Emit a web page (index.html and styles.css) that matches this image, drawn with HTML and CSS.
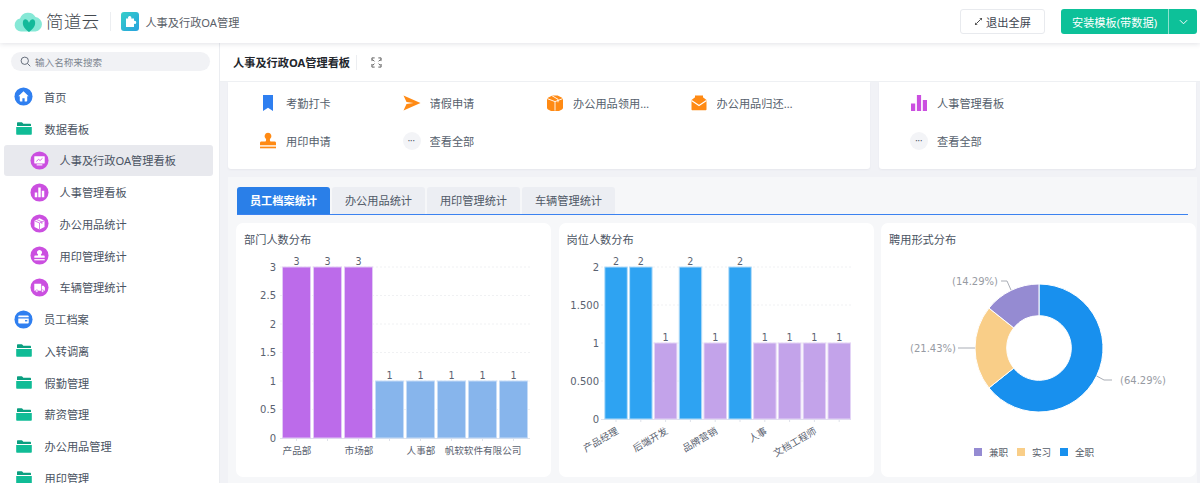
FILE: index.html
```html
<!DOCTYPE html>
<html lang="zh-CN">
<head>
<meta charset="utf-8">
<title>人事及行政OA管理</title>
<link rel="stylesheet" href="styles.css">
</head>
<body>
<svg class="defs" width="0" height="0" aria-hidden="true">
  <symbol id="i-folder" viewBox="0 0 16 13"><path d="M1 1.2C1 .6 1.4.2 2 .2h3.6c.4 0 .7.2.9.5l.8 1.1H14c.6 0 1 .4 1 1V4H1z" fill="#0a9f80"/><path d="M.2 5h15.6v6.8c0 .6-.4 1-1 1H1.2c-.6 0-1-.4-1-1z" fill="#10bc96"/></symbol>
  <symbol id="i-home" viewBox="0 0 20 20"><circle cx="10" cy="10" r="9.5" fill="#2f7ff0"/><path d="M10 4.6 4.6 9.8h1.5v4.7c0 .4.3.7.7.7h2v-3.4h2.4v3.4h2c.4 0 .7-.3.7-.7V9.8h1.5z" fill="#fff"/></symbol>
  <symbol id="i-wallet" viewBox="0 0 20 20"><circle cx="10" cy="10" r="9.5" fill="#2f7ff0"/><path d="M4.5 6.6c0-.5.4-.9.9-.9h9.2c.5 0 .9.4.9.9v.9h-11zm0 2.3h11v4.5c0 .5-.4.9-.9.9H5.4c-.5 0-.9-.4-.9-.9z" fill="#fff"/><rect x="11.6" y="10.6" width="2.4" height="1.4" fill="#2f7ff0"/></symbol>
  <symbol id="i-screen" viewBox="0 0 20 20"><circle cx="10" cy="10" r="9.5" fill="#cb4fe0"/><path d="M5 5.5h10c.3 0 .5.2.5.5v6.6c0 .3-.2.5-.5.5H5c-.3 0-.5-.2-.5-.5V6c0-.3.2-.5.5-.5z" fill="#fff"/><rect x="7" y="14" width="6" height="1.2" fill="#fff"/><path d="m6.6 11 2.4-2.2 1.6 1.2 2.6-2.4" fill="none" stroke="#cb4fe0" stroke-width=".9"/></symbol>
  <symbol id="i-bars" viewBox="0 0 20 20"><circle cx="10" cy="10" r="9.5" fill="#cb4fe0"/><path d="M5 10h2.6v5H5zM8.7 4.8h2.6V15H8.7zM12.4 8.2H15V15h-2.6z" fill="#fff"/></symbol>
  <symbol id="i-box" viewBox="0 0 20 20"><circle cx="10" cy="10" r="9.5" fill="#cb4fe0"/><path d="M4.7 7 10 4.4 15.3 7v6.6L10 16.2l-5.3-2.6z" fill="#fff"/><path d="M4.9 7.2 10 9.5l5.1-2.3M10 9.5v6.7M7.2 5.8l5.3 2.5v2.2" fill="none" stroke="#cb4fe0" stroke-width=".8"/></symbol>
  <symbol id="i-stamp" viewBox="0 0 20 20"><circle cx="10" cy="10" r="9.5" fill="#cb4fe0"/><path d="M10 4.2a2.6 2.6 0 0 1 1.7 4.6c-.3.3-.3 1 .1 1.3h2.8c.5 0 .9.4.9.9v1.3H4.500v-1.300c0-.5.4-.9.9-.9h2.800c.4-.3.4-1 .1-1.300A2.600 2.600 0 0 1 10 4.200z" fill="#fff"/><rect x="4.500" y="13.800" width="11" height="1.300" fill="#fff"/></symbol>
  <symbol id="i-truck" viewBox="0 0 20 20"><circle cx="10" cy="10" r="9.500" fill="#cb4fe0"/><path d="M4.500 6h7.300v7.300H4.500zM12.500 8.200h1.800l1.400 1.900v3.200h-3.200z" fill="#fff"/><circle cx="7.200" cy="13.700" r="1.300" fill="#fff" stroke="#cb4fe0" stroke-width=".6"/><circle cx="13.300" cy="13.700" r="1.300" fill="#fff" stroke="#cb4fe0" stroke-width=".6"/></symbol>
  <symbol id="t-mark" viewBox="0 0 18 18"><path d="M4 1h10v16l-5-3.300L4 17z" fill="#2f7ff0"/></symbol>
  <symbol id="t-send" viewBox="0 0 18 18"><path d="M.5 1.600 17.500 9 .5 16.400l3-6.400 7-1-7-1z" fill="#ff8a14"/></symbol>
  <symbol id="t-box" viewBox="0 0 18 18"><path d="M2 3.800 6.300 1.400h5.400L16 3.800c.6.300 1 .9 1 1.600v8.400c0 .7-.4 1.300-1 1.600l-3 1.500H5l-3-1.500c-.6-.3-1-.9-1-1.600V5.400c0-.7.4-1.300 1-1.600z" fill="#ff8a14"/><path d="M1.200 4.600 9 7.600l7.800-3M9 7.600v9M5.800 1.600l6.200 3.700v3" fill="none" stroke="#fff" stroke-width=".9"/></symbol>
  <symbol id="t-mail" viewBox="0 0 18 18"><path d="M1.500 6 6 2.500v3.200L9 8l3-2.300V2.500L16.500 6v9.300c0 .6-.4 1-1 1h-13c-.6 0-1-.4-1-1z" fill="#ff8a14"/><path d="M5 1.500h8v4.200L9 8.800 5 5.700z" fill="#ff8a14"/><path d="M1.500 6.500 9 11.500l7.500-5" fill="none" stroke="#fff" stroke-width="1.100"/></symbol>
  <symbol id="t-stamp" viewBox="0 0 18 18"><path d="M9 .8a3.400 3.400 0 0 1 2.200 6c-.5.500-.5 2 .3 2.700h4.100c.8 0 1.400.6 1.400 1.400v2.300H1v-2.300c0-.8.6-1.400 1.400-1.400h4.100c.8-.7.800-2.200.3-2.700A3.400 3.400 0 0 1 9 .8z" fill="#ff8a14"/><rect x="1" y="14.600" width="16" height="1.700" fill="#ff8a14"/></symbol>
  <symbol id="t-bars" viewBox="0 0 18 18"><path d="M1 9.500h4.200V17H1zM6.900 1h4.200v16H6.900zM12.800 6H17v11h-4.200z" fill="#cb4fe0"/></symbol>
</svg>

<div class="app">
  <header class="topbar">
    <svg class="logo" viewBox="0 0 28 20" aria-hidden="true">
      <path d="M7 19.500a6.500 6.500 0 0 1-1-12.900A8.500 8.500 0 0 1 21.500 5 7.300 7.300 0 0 1 21.500 19.500z" fill="#86e8d6"/>
      <path d="M15 20C10.500 16.500 8.200 13.500 9 9.500 9.800 6.300 13.300 6.500 15 10.800 16.700 6.500 20.200 6.300 21 9.500 21.800 13.500 19.500 16.500 15 20z" fill="#14b99a"/>
    </svg>
    <span class="brand">简道云</span>
    <span class="topbar-sep"></span>
    <span class="app-badge">
      <svg viewBox="0 0 18 18" aria-hidden="true"><path d="M5 6h2.200c-.6-1.600.4-2.500 1.500-2.500s2.100.9 1.500 2.500H13v2.500c1.500-.5 2.200.4 2.200 1.400s-.7 1.900-2.200 1.400V14.500H5z" fill="#fff"/></svg>
    </span>
    <span class="app-name">人事及行政OA管理</span>
    <div class="topbar-actions">
      <button class="btn-exit">
        <svg viewBox="0 0 10 10" aria-hidden="true"><path d="M9 1 6 1.600 8.400 4zM1 9l3-.6L1.600 6z" fill="#333"/><path d="M7 3 3 7" stroke="#333" stroke-width="1"/></svg>
        退出全屏
      </button>
      <div class="btn-install">
        <span class="btn-install-main">安装模板(带数据)</span>
        <span class="btn-install-arrow">
          <svg viewBox="0 0 10 6" aria-hidden="true"><path d="m1 1 4 4 4-4" fill="none" stroke="#fff" stroke-width="1.100"/></svg>
        </span>
      </div>
    </div>
  </header>

  <div class="layout">
    <aside class="sidebar">
      <div class="search">
        <svg viewBox="0 0 12 12" aria-hidden="true"><circle cx="5.200" cy="5.200" r="4" fill="none" stroke="#5b6472" stroke-width="1"/><path d="m8.200 8.200 3 3" stroke="#5b6472" stroke-width="1"/></svg>
        <span>输入名称来搜索</span>
      </div>
      <nav class="nav">
        <a class="nav-row"><svg class="nav-icon"><use href="#i-home"/></svg>首页</a>
        <a class="nav-row"><svg class="nav-folder"><use href="#i-folder"/></svg>数据看板</a>
        <a class="nav-row sub active"><svg class="nav-icon"><use href="#i-screen"/></svg>人事及行政OA管理看板</a>
        <a class="nav-row sub"><svg class="nav-icon"><use href="#i-bars"/></svg>人事管理看板</a>
        <a class="nav-row sub"><svg class="nav-icon"><use href="#i-box"/></svg>办公用品统计</a>
        <a class="nav-row sub"><svg class="nav-icon"><use href="#i-stamp"/></svg>用印管理统计</a>
        <a class="nav-row sub"><svg class="nav-icon"><use href="#i-truck"/></svg>车辆管理统计</a>
        <a class="nav-row"><svg class="nav-icon"><use href="#i-wallet"/></svg>员工档案</a>
        <a class="nav-row"><svg class="nav-folder"><use href="#i-folder"/></svg>入转调离</a>
        <a class="nav-row"><svg class="nav-folder"><use href="#i-folder"/></svg>假勤管理</a>
        <a class="nav-row"><svg class="nav-folder"><use href="#i-folder"/></svg>薪资管理</a>
        <a class="nav-row"><svg class="nav-folder"><use href="#i-folder"/></svg>办公用品管理</a>
        <a class="nav-row"><svg class="nav-folder"><use href="#i-folder"/></svg>用印管理</a>
      </nav>
    </aside>

    <main class="main">
      <div class="titlebar">
        <h1>人事及行政OA管理看板</h1>
        <span class="titlebar-sep"></span>
        <svg class="expand" viewBox="0 0 12 12" aria-hidden="true"><path d="M4 1H1v3l1-1 1.800 1.800M8 1h3v3l-1-1-1.800 1.800M4 11H1V8l1 1 1.800-1.800M8 11h3V8l-1 1-1.800-1.800" fill="none" stroke="#444" stroke-width=".9"/></svg>
      </div>

      <div class="content">
        <section class="quick-row">
          <div class="quick-card wide">
            <a class="tile"><svg class="tile-icon"><use href="#t-mark"/></svg><span>考勤打卡</span></a>
            <a class="tile"><svg class="tile-icon"><use href="#t-send"/></svg><span>请假申请</span></a>
            <a class="tile"><svg class="tile-icon"><use href="#t-box"/></svg><span>办公用品领用申请</span></a>
            <a class="tile"><svg class="tile-icon"><use href="#t-mail"/></svg><span>办公用品归还申请</span></a>
            <a class="tile"><svg class="tile-icon"><use href="#t-stamp"/></svg><span>用印申请</span></a>
            <a class="tile"><i class="more">•••</i><span>查看全部</span></a>
          </div>
          <div class="quick-card narrow">
            <a class="tile"><svg class="tile-icon"><use href="#t-bars"/></svg><span>人事管理看板</span></a>
            <a class="tile"><i class="more">•••</i><span>查看全部</span></a>
          </div>
        </section>

        <section class="panel">
          <div class="tabs">
            <span class="tab current">员工档案统计</span>
            <span class="tab">办公用品统计</span>
            <span class="tab">用印管理统计</span>
            <span class="tab">车辆管理统计</span>
          </div>
          <div class="charts">
            <article class="chart-card">
              <h2>部门人数分布</h2>
              <svg class="chart" viewBox="0 0 315 220">
                <g class="grid"><path d="M44 10H294M44 38.500H294M44 67H294M44 95.500H294M44 124H294M44 152.500H294"/></g>
                <g class="axis"><path d="M44 181.500H294"/><path d="M60.500 181v3M91.500 181v3M122.500 181v3M153.500 181v3M184.500 181v3M215.500 181v3M246.500 181v3M277.500 181v3"/></g>
                <g class="ylabels">
                  <text x="40" y="13.500">3</text><text x="40" y="42">2.5</text><text x="40" y="70.500">2</text><text x="40" y="99">1.5</text><text x="40" y="127.500">1</text><text x="40" y="156">0.5</text><text x="40" y="184.500">0</text>
                </g>
                <g class="bar purple"><rect x="46.500" y="10" width="28" height="171"/><rect x="77.500" y="10" width="28" height="171"/><rect x="108.500" y="10" width="28" height="171"/></g>
                <g class="bar sky"><rect x="139.500" y="124" width="28" height="57"/><rect x="170.500" y="124" width="28" height="57"/><rect x="201.500" y="124" width="28" height="57"/><rect x="232.500" y="124" width="28" height="57"/><rect x="263.500" y="124" width="28" height="57"/></g>
                <g class="values">
                  <text x="60.500" y="7.500">3</text><text x="91.500" y="7.500">3</text><text x="122.500" y="7.500">3</text><text x="153.500" y="121.500">1</text><text x="184.500" y="121.500">1</text><text x="215.500" y="121.500">1</text><text x="246.500" y="121.500">1</text><text x="277.500" y="121.500">1</text>
                </g>
                <g class="xlabels"><text x="61" y="197">产品部</text><text x="123" y="197">市场部</text><text x="185" y="197">人事部</text><text x="247" y="197">帆软软件有限公司</text></g>
              </svg>
            </article>

            <article class="chart-card">
              <h2>岗位人数分布</h2>
              <svg class="chart" viewBox="0 0 315 220">
                <g class="grid"><path d="M42 10H292M42 48H292M42 86H292M42 124H292"/></g>
                <g class="axis"><path d="M42 162.500H292"/><path d="M57 162v3M81.800 162v3M106.600 162v3M131.400 162v3M156.200 162v3M181 162v3M205.800 162v3M230.600 162v3M255.400 162v3M280.200 162v3"/></g>
                <g class="ylabels"><text x="40" y="13.500">2</text><text x="40" y="51.500">1.500</text><text x="40" y="89.500">1</text><text x="40" y="127.500">0.500</text><text x="40" y="165.500">0</text></g>
                <g class="bar azure"><rect x="45.800" y="10" width="22.500" height="152"/><rect x="70.600" y="10" width="22.500" height="152"/><rect x="120.200" y="10" width="22.500" height="152"/><rect x="169.800" y="10" width="22.500" height="152"/></g>
                <g class="bar lilac"><rect x="95.400" y="86" width="22.500" height="76"/><rect x="145" y="86" width="22.500" height="76"/><rect x="194.600" y="86" width="22.500" height="76"/><rect x="219.400" y="86" width="22.500" height="76"/><rect x="244.200" y="86" width="22.500" height="76"/><rect x="269" y="86" width="22.500" height="76"/></g>
                <g class="values"><text x="57" y="7.500">2</text><text x="81.800" y="7.500">2</text><text x="106.600" y="83.500">1</text><text x="131.400" y="7.500">2</text><text x="156.200" y="83.500">1</text><text x="181" y="7.500">2</text><text x="205.800" y="83.500">1</text><text x="230.600" y="83.500">1</text><text x="255.400" y="83.500">1</text><text x="280.200" y="83.500">1</text></g>
                <g class="xlabels tilted">
                  <text transform="translate(60 176) rotate(-30)">产品经理</text>
                  <text transform="translate(109.600 176) rotate(-30)">后端开发</text>
                  <text transform="translate(159.200 176) rotate(-30)">品牌营销</text>
                  <text transform="translate(208.800 176) rotate(-30)">人事</text>
                  <text transform="translate(258.400 176) rotate(-30)">文档工程师</text>
                </g>
              </svg>
            </article>

            <article class="chart-card">
              <h2>聘用形式分布</h2>
              <svg class="chart" viewBox="0 0 315 220">
                <path class="slice" fill="#1890ee" d="M158 27A64 64 0 1 1 107.960 130.900L132.750 111.140A32.300 32.300 0 1 0 158 58.700Z"/>
                <path class="slice" fill="#f9ce88" d="M107.960 130.900A64 64 0 0 1 107.960 51.100L132.750 70.860A32.300 32.300 0 0 0 132.750 111.140Z"/>
                <path class="slice" fill="#958bd2" d="M107.960 51.100A64 64 0 0 1 158 27L158 58.700A32.300 32.300 0 0 0 132.750 70.860Z"/>
                <g class="leaders"><path d="M120 24H126L130 33"/><path d="M77 91H94"/><path d="M215.700 119 223 123H231"/></g>
                <g class="pct"><text x="117" y="27.500">(14.29%)</text><text x="75" y="94.500">(21.43%)</text><text x="285" y="126.500">(64.29%)</text></g>
                <g class="legend">
                  <rect x="93" y="191" width="8" height="8" fill="#958bd2"/><text x="108" y="199">兼职</text>
                  <rect x="136" y="191" width="8" height="8" fill="#f9ce88"/><text x="151" y="199">实习</text>
                  <rect x="179" y="191" width="8" height="8" fill="#1890ee"/><text x="194" y="199">全职</text>
                </g>
              </svg>
            </article>
          </div>
        </section>
      </div>
    </main>
  </div>
</div>
</body>
</html>
```

FILE: styles.css
```css
* { box-sizing: border-box; }
html, body { margin: 0; height: 100%; overflow: hidden; }
body {
  font-family: "Noto Sans", "Noto Sans CJK SC", sans-serif;
  font-size: 11.2px;
  color: #4a5362;
  background: #fff;
}
.defs { position: absolute; }
.app { height: 483px; display: flex; flex-direction: column; overflow: hidden; }

/* top bar */
.topbar {
  flex: 0 0 43px;
  display: flex;
  align-items: center;
  padding: 0 3px 0 14px;
  background: #fff;
  box-shadow: 0 1px 5px rgba(30, 40, 70, .13);
  position: relative;
  z-index: 2;
}
.logo { width: 28px; height: 20px; flex: none; }
.brand { margin-left: 4px; font-size: 17.6px; font-weight: 300; letter-spacing: .2px; color: #44494f; line-height: 1; }
.topbar-sep { width: 1px; height: 19px; background: #eceef1; margin: 0 10px 0 11px; }
.app-badge {
  width: 18px; height: 19px;
  border-radius: 3px;
  background: linear-gradient(135deg, #35cfc9, #27a2de);
  display: flex;
}
.app-badge svg { width: 18px; height: 19px; }
.app-name { margin-left: 6px; color: #5a6068; }
.topbar-actions { margin-left: auto; display: flex; gap: 16px; }
.btn-exit {
  width: 85px; height: 25px;
  display: flex; align-items: center; justify-content: center; gap: 3px;
  background: #fff;
  border: 1px solid #e8eaee;
  border-radius: 3px;
  font: inherit;
  color: #3d4450;
  padding: 0;
}
.btn-exit svg { width: 9px; height: 9px; }
.btn-install { display: flex; height: 25px; border-radius: 3px; overflow: hidden; color: #fff; background: #0dc199; }
.btn-install-main { width: 108px; display: flex; align-items: center; justify-content: center; border-right: 1px solid #8ce3cf; }
.btn-install-arrow { width: 28px; display: flex; align-items: center; justify-content: center; }
.btn-install-arrow svg { width: 9px; height: 6px; }

/* layout */
.layout { flex: 1; display: flex; min-height: 0; }
.sidebar { flex: 0 0 220px; border-right: 1px solid #ebedf1; padding-top: 9px; background: #fff; overflow: hidden; }
.search {
  margin: 0 9px 10px 11px;
  height: 19px;
  border-radius: 10px;
  background: #f1f2f5;
  display: flex; align-items: center; gap: 4px;
  padding-left: 9px;
  font-size: 9.6px;
  color: #7d8590;
}
.search svg { width: 11px; height: 11px; }
.nav-row {
  height: 31.75px;
  display: flex; align-items: center; gap: 11px;
  padding-left: 10px;
  margin: 0 6px 0 4px;
  border-radius: 3px;
}
.nav-row.sub { padding-left: 25.500px; }
.nav-row.active { background: #e8e9ee; }
.nav-icon { width: 19px; height: 19px; flex: none; }
.nav-folder { width: 16px; height: 13px; flex: none; margin: 0 1.500px 0 2px; }

.main { flex: 1; min-width: 0; display: flex; flex-direction: column; background: #f1f2f6; }
.titlebar {
  flex: 0 0 39px;
  display: flex; align-items: center;
  padding-left: 13px;
  background: #fff;
  border-bottom: 1px solid #eef0f3;
}
.titlebar h1 { margin: 0; font-size: 11.2px; font-weight: 700; color: #22262c; }
.titlebar-sep { width: 1px; height: 15px; background: #eceef1; margin-left: 6px; }
.expand { width: 11px; height: 11px; margin-left: 14px; }

.content { flex: 1; min-height: 0; padding: 0 3px 0 8px; overflow: hidden; }
.quick-row { display: flex; gap: 9px; margin-right: 1px; }
.quick-card {
  height: 87px;
  padding: 2px 0 0 31px;
  background: #fff;
  border-radius: 0 0 3px 3px;
  box-shadow: 0 1px 2px rgba(30, 40, 70, .05);
  display: grid;
  grid-auto-rows: 38px;
}
.quick-card.wide { flex: 0 0 642px; grid-template-columns: repeat(4, 143.500px); }
.quick-card.narrow { flex: 1; grid-template-columns: 1fr; }
.tile { display: flex; align-items: center; gap: 9px; min-width: 0; color: #565f6d; }
.tile span { max-width: 86px; overflow: hidden; white-space: nowrap; text-overflow: ellipsis; }
.tile-icon { width: 18px; height: 18px; flex: none; }
.more {
  width: 18px; height: 18px; flex: none;
  border-radius: 50%;
  background: #f3f4f7;
  color: #4a5362;
  font-style: normal;
  font-size: 5px;
  letter-spacing: .5px;
  display: flex; align-items: center; justify-content: center;
}

.panel { margin-top: 8px; padding: 9.500px 0 0 8px; background: #f6f7f9; height: 306px; }
.tabs {
  display: flex; gap: 2px;
  margin: 0 9px 0 1px;
  border-bottom: 1.200px solid #3b82f0;
}
.tab {
  width: 93px; height: 27.500px;
  display: flex; align-items: center; justify-content: center;
  background: #eceef3;
  border-radius: 3px 3px 0 0;
  color: #4f5866;
}
.tab.current { background: #2a7fe8; color: #fff; font-weight: 700; }
.charts { display: grid; grid-template-columns: repeat(3, 315px); column-gap: 7.500px; margin-top: 8px; }
.chart-card { height: 254px; background: #fff; border-radius: 7px; }
.chart-card h2 { margin: 0; height: 34px; line-height: 34px; padding-left: 8px; font-size: 11.2px; font-weight: 400; color: #4a5362; }
.chart { display: block; width: 315px; height: 220px; overflow: hidden; }

/* chart marks */
.chart text { font-family: "DejaVu Sans", "Noto Sans CJK SC", sans-serif; font-size: 9.600px; fill: #5a6270; }
.grid path { stroke: #f0f1f3; stroke-dasharray: 2 2; fill: none; }
.axis path { stroke: #dfe2ea; fill: none; }
.ylabels text { text-anchor: end; font-size: 10px; }
.values text { text-anchor: middle; }
.xlabels text { text-anchor: middle; font-family: "Noto Sans CJK SC", sans-serif; }
.xlabels.tilted text { text-anchor: end; }
.bar rect { stroke-width: 1; }
.purple rect { fill: #bc6bea; stroke: #e2c9f6; }
.sky rect { fill: #87b5ec; stroke: #c6dcf7; }
.azure rect { fill: #2ea3f2; stroke: #b5ddf9; }
.lilac rect { fill: #c3a3ea; stroke: #e3d4f6; }
.slice { stroke: #fff; stroke-width: 1; }
.leaders path { stroke: #a9adb5; fill: none; }
.pct text { text-anchor: end; font-size: 10px; fill: #979ba3; }
.legend text { font-family: "Noto Sans CJK SC", sans-serif; fill: #555c68; }
```
